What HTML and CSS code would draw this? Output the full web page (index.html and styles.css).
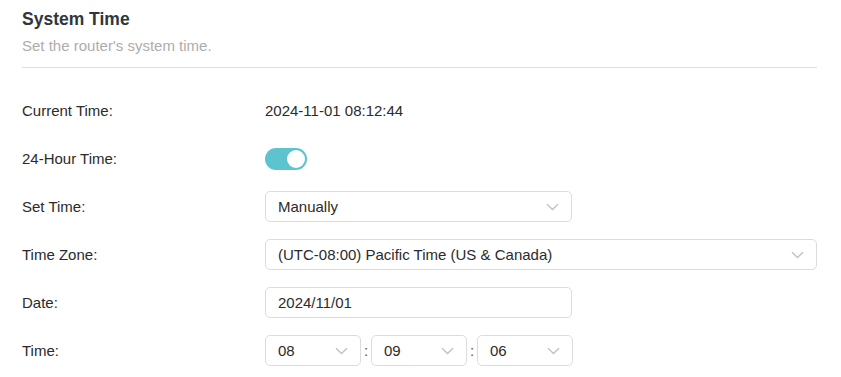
FILE: index.html
```html
<!DOCTYPE html>
<html lang="en">
<head>
<meta charset="utf-8">
<title>System Time</title>
<link rel="stylesheet" href="styles.css">
</head>
<body>
<div class="page">
  <h1 class="title">System Time</h1>
  <p class="subtitle">Set the router's system time.</p>
  <div class="divider"></div>
  <div class="form">
    <div class="label">Current Time:</div>
    <div class="field"><span class="value">2024-11-01 08:12:44</span></div>

    <div class="label">24-Hour Time:</div>
    <div class="field"><span class="toggle"><span class="knob"></span></span></div>

    <div class="label">Set Time:</div>
    <div class="field">
      <div class="select w-mid"><span class="sel-text">Manually</span>
        <svg class="chev" width="13" height="8" viewBox="0 0 13 8"><path d="M1 1.2 L6.5 6.5 L12 1.2" fill="none" stroke="#c2c2c2" stroke-width="1.4"/></svg>
      </div>
    </div>

    <div class="label">Time Zone:</div>
    <div class="field">
      <div class="select w-full"><span class="sel-text">(UTC-08:00) Pacific Time (US &amp; Canada)</span>
        <svg class="chev" width="13" height="8" viewBox="0 0 13 8"><path d="M1 1.2 L6.5 6.5 L12 1.2" fill="none" stroke="#c2c2c2" stroke-width="1.4"/></svg>
      </div>
    </div>

    <div class="label">Date:</div>
    <div class="field">
      <div class="input w-mid">2024/11/01</div>
    </div>

    <div class="label">Time:</div>
    <div class="field time-group">
      <div class="select w-small"><span class="sel-text">08</span>
        <svg class="chev" width="13" height="8" viewBox="0 0 13 8"><path d="M1 1.2 L6.5 6.5 L12 1.2" fill="none" stroke="#c2c2c2" stroke-width="1.4"/></svg>
      </div>
      <span class="colon">:</span>
      <div class="select w-small"><span class="sel-text">09</span>
        <svg class="chev" width="13" height="8" viewBox="0 0 13 8"><path d="M1 1.2 L6.5 6.5 L12 1.2" fill="none" stroke="#c2c2c2" stroke-width="1.4"/></svg>
      </div>
      <span class="colon">:</span>
      <div class="select w-small"><span class="sel-text">06</span>
        <svg class="chev" width="13" height="8" viewBox="0 0 13 8"><path d="M1 1.2 L6.5 6.5 L12 1.2" fill="none" stroke="#c2c2c2" stroke-width="1.4"/></svg>
      </div>
    </div>
  </div>
</div>
</body>
</html>
```

FILE: styles.css
```css
html, body {
  margin: 0;
  padding: 0;
  background: #ffffff;
}

body {
  font-family: "Liberation Sans", Arial, sans-serif;
  color: #333333;
}

.page {
  padding: 9px 24px 0 22px;
}

.title {
  margin: 0;
  font-size: 17.5px;
  line-height: 20px;
  font-weight: bold;
  color: #2f373c;
}

.subtitle {
  margin: 7px 0 0 0;
  font-size: 15px;
  line-height: 20px;
  color: #adadad;
}

.divider {
  margin-top: 11px;
  height: 1px;
  background: #dedede;
}

.form {
  margin-top: 27px;
  display: grid;
  grid-template-columns: 243px 1fr;
  grid-auto-rows: 31px;
  row-gap: 17px;
  align-items: center;
  font-size: 15px;
}

.label {
  color: #2b2b2b;
  line-height: 20px;
}

.field {
  display: flex;
  align-items: center;
  height: 31px;
}

.value {
  color: #2b2b2b;
}

.toggle {
  position: relative;
  display: inline-block;
  width: 42px;
  height: 22px;
  border-radius: 11px;
  background: #5dc3ce;
}

.knob {
  position: absolute;
  top: 2px;
  right: 2px;
  width: 18px;
  height: 18px;
  border-radius: 50%;
  background: #ffffff;
}

.select,
.input {
  box-sizing: border-box;
  height: 31px;
  border: 1px solid #dcdcdc;
  border-radius: 5px;
  display: flex;
  align-items: center;
  padding: 0 12px;
  color: #2b2b2b;
  background: #ffffff;
}

.select {
  justify-content: space-between;
}

.sel-text {
  white-space: nowrap;
}

.chev {
  flex: none;
}

.w-mid {
  width: 307px;
}

.w-full {
  width: 100%;
}

.w-small {
  width: 96px;
}

.time-group {
  gap: 0;
}

.colon {
  width: 10px;
  text-align: center;
  color: #555555;
}
```
